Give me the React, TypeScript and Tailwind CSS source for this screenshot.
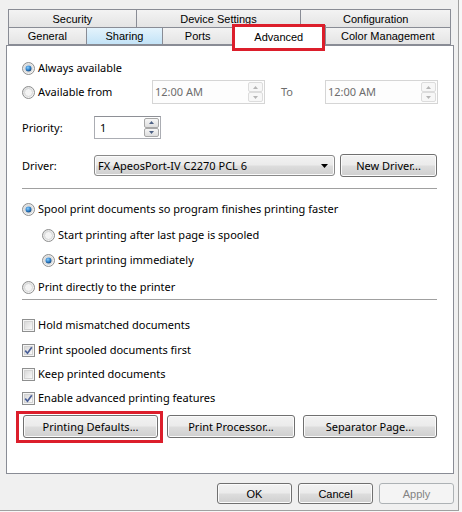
import { useId } from "react";
import clsx from "clsx";

const TAB = "flex items-center justify-center border border-[#898c95] text-[11px] text-black";
const TAB_IDLE = "bg-[linear-gradient(#f3f3f3,#e4e4e4)]";

function Radio({ checked }: { checked?: boolean }) {
  const id = useId();
  return (
    <svg width="13" height="13" viewBox="0 0 13 13" className="shrink-0">
      <defs>
        <linearGradient id={`${id}r`} x1="0" y1="0" x2="1" y2="1">
          <stop offset="0" stopColor="#dcdcdc" />
          <stop offset="1" stopColor="#fbfbfb" />
        </linearGradient>
        <radialGradient id={`${id}d`} cx="0.4" cy="0.35" r="0.7">
          <stop offset="0" stopColor="#8ad0ff" />
          <stop offset="0.6" stopColor="#2a7ac4" />
          <stop offset="1" stopColor="#123e6b" />
        </radialGradient>
      </defs>
      <circle cx="6.5" cy="6.5" r="6" fill={`url(#${id}r)`} stroke="#8e8f8f" />
      <circle cx="6.5" cy="6.5" r="4" fill="#f4f4f4" stroke="#cfd0d0" strokeWidth="0.8" />
      {checked && <circle cx="6.5" cy="6.5" r="3" fill={`url(#${id}d)`} />}
    </svg>
  );
}

function Check({ checked }: { checked?: boolean }) {
  return (
    <div className="relative flex size-[13px] shrink-0 items-center justify-center border border-[#8e8f8f] bg-[#f4f4f4]">
      <div className="size-[9px] border border-[#d2d2d2] bg-[linear-gradient(135deg,#d9d9d9,#f9f9f9)]" />
      {checked && (
        <svg width="9" height="9" viewBox="0 0 9 9" className="absolute">
          <path d="M1.2 4.6 L3.5 7.2 L7.8 1.2" fill="none" stroke="#4a5f97" strokeWidth="1.7" />
        </svg>
      )}
    </div>
  );
}

function Btn({ children, className, disabled }: { children: React.ReactNode; className?: string; disabled?: boolean }) {
  return (
    <div
      className={clsx(
        "flex items-center justify-center rounded-[3px] border",
        disabled
          ? "border-[#adb2b5] bg-[#f4f4f4] text-[#838383]"
          : "border-[#707070] bg-[linear-gradient(#f2f2f2_0%,#ebebeb_48%,#dddddd_52%,#cfcfcf_100%)] shadow-[inset_0_0_0_1px_#fbfbfb]",
        className
      )}
    >
      {children}
    </div>
  );
}

function Spin({ disabled }: { disabled?: boolean }) {
  const arrow = disabled ? "#b5b5b5" : "#4d6185";
  const part = clsx(
    "flex flex-1 items-center justify-center rounded-[2px] border",
    disabled ? "border-[#dcdcdc] bg-[#f7f7f7]" : "border-[#a7a7a7] bg-[linear-gradient(#f6f6f6,#dedede)]"
  );
  return (
    <div className="flex h-full w-[16px] flex-col py-px pr-px">
      <div className={part}>
        <svg width="5" height="3" viewBox="0 0 5 3">
          <path d="M0 3 L2.5 0 L5 3 Z" fill={arrow} />
        </svg>
      </div>
      <div className={part}>
        <svg width="5" height="3" viewBox="0 0 5 3">
          <path d="M0 0 L2.5 3 L5 0 Z" fill={arrow} />
        </svg>
      </div>
    </div>
  );
}

function TimeBox() {
  return (
    <div className="flex h-[24px] w-[113px] items-center border border-[#d5d5d5] bg-[#fdfdfd] pl-[2px] text-[#6d6d6d]">
      <span className="flex-1">12:00 AM</span>
      <Spin disabled />
    </div>
  );
}

function Option({ children, checked, box, className }: { children: React.ReactNode; checked?: boolean; box?: boolean; className?: string }) {
  return (
    <div className={clsx("flex h-[16px] items-center gap-[3px]", className)}>
      {box ? <Check checked={checked} /> : <Radio checked={checked} />}
      <span>{children}</span>
    </div>
  );
}

export default function App() {
  return (
    <div className="h-[512px] w-[462px] overflow-hidden bg-[#f7f7f7] font-['Noto_Sans',sans-serif] text-[11px] leading-[16px] text-black">
      <div className="h-[511px] w-[459px] border-r border-b border-[#a0a0a0] bg-[#f0f0f0] pl-[6px] pt-[9px]">
        {/* tabs */}
        <div className="ml-[2px] w-[443px] font-['Liberation_Sans',Arial,sans-serif]">
          <div className="flex h-[18px]">
            <div className={clsx(TAB, TAB_IDLE, "w-[129px] border-b-0")}>Security</div>
            <div className={clsx(TAB, TAB_IDLE, "-ml-px w-[166px] border-b-0")}>Device Settings</div>
            <div className={clsx(TAB, TAB_IDLE, "-ml-px w-[151px] border-b-0")}>Configuration</div>
          </div>
          <div className="flex h-[18px] items-end">
            <div className={clsx(TAB, TAB_IDLE, "h-[18px] w-[79px]")}>General</div>
            <div className={clsx(TAB, "-ml-px h-[18px] w-[78px] border-[#3c7fb1] bg-[linear-gradient(#e4f3fc,#c3e3f7)]")}>Sharing</div>
            <div className={clsx(TAB, TAB_IDLE, "-ml-px h-[18px] w-[71px]")}>Ports</div>
            <div className={clsx(TAB, "relative z-10 -mb-px -ml-px h-[21px] w-[94px] items-start border-b-0 bg-white pt-[3px]")}>
              Advanced
              <div className="absolute -top-[2px] -left-px h-[27px] w-[93px] border-[3px] border-[#dc1e2b]" />
            </div>
            <div className={clsx(TAB, TAB_IDLE, "-ml-px h-[18px] w-[127px]")}>Color Management</div>
          </div>
        </div>

        {/* panel */}
        <div className="h-[429px] w-[448px] border border-[#898c95] bg-white pt-[14px] pl-[15px]">
          <Option checked>Always available</Option>
          <div className="mt-[4px] flex h-[24px] items-center">
            <Option className="w-[130px]">Available from</Option>
            <TimeBox />
            <span className="w-[60px] pl-[16px] text-[#6d6d6d]">To</span>
            <TimeBox />
          </div>

          <div className="mt-[12px] flex h-[23px] items-center">
            <span className="w-[72px]">Priority:</span>
            <div className="flex h-[23px] w-[67px] items-center border border-[#abadb3] border-t-[#8e9096] pl-[5px]">
              <span className="flex-1">1</span>
              <Spin />
            </div>
          </div>

          <div className="mt-[15px] flex h-[23px] items-center">
            <span className="w-[72px]">Driver:</span>
            <div className="flex h-[21px] w-[241px] items-center rounded-[3px] border border-[#8a8a8a] bg-[linear-gradient(#f2f2f2_0%,#ebebeb_48%,#dddddd_52%,#cfcfcf_100%)] pl-[3px] pr-[6px] shadow-[inset_0_0_0_1px_#fbfbfb]">
              <span className="flex-1">FX ApeosPort-IV C2270 PCL 6</span>
              <svg width="7" height="4" viewBox="0 0 7 4">
                <path d="M0 0 L7 0 L3.5 4 Z" fill="#000" />
              </svg>
            </div>
            <Btn className="ml-[5px] h-[23px] w-[97px]">New Driver...</Btn>
          </div>

          <div className="mt-[11px] h-px w-[415px] bg-[#a0a0a0]" />

          <Option checked className="mt-[12px]">Spool print documents so program finishes printing faster</Option>
          <Option className="mt-[10px] pl-[20px]">Start printing after last page is spooled</Option>
          <Option checked className="mt-[9px] pl-[20px]">Start printing immediately</Option>
          <Option className="mt-[11px]">Print directly to the printer</Option>

          <div className="mt-[4px] h-px w-[415px] bg-[#a0a0a0]" />

          <Option box className="mt-[17px]">Hold mismatched documents</Option>
          <Option box checked className="mt-[9px]">Print spooled documents first</Option>
          <Option box className="mt-[8px]">Keep printed documents</Option>
          <Option box checked className="mt-[8px]">Enable advanced printing features</Option>

          <div className="mt-[9px] flex h-[23px] items-center">
            <Btn className="relative ml-px h-[23px] w-[135px]">
              Printing Defaults...
              <div className="absolute -top-[5px] -right-[6px] -bottom-[6px] -left-[8px] border-[3px] border-[#dc1e2b]" />
            </Btn>
            <Btn className="ml-[9px] h-[23px] w-[128px]">Print Processor...</Btn>
            <Btn className="ml-[8px] h-[23px] w-[134px]">Separator Page...</Btn>
          </div>
        </div>

        {/* footer */}
        <div className="mt-[9px] flex w-[448px] justify-end gap-[6px] font-['Liberation_Sans',Arial,sans-serif]">
          <Btn className="h-[21px] w-[75px]">OK</Btn>
          <Btn className="h-[21px] w-[75px]">Cancel</Btn>
          <Btn disabled className="h-[21px] w-[75px]">Apply</Btn>
        </div>
      </div>
    </div>
  );
}
